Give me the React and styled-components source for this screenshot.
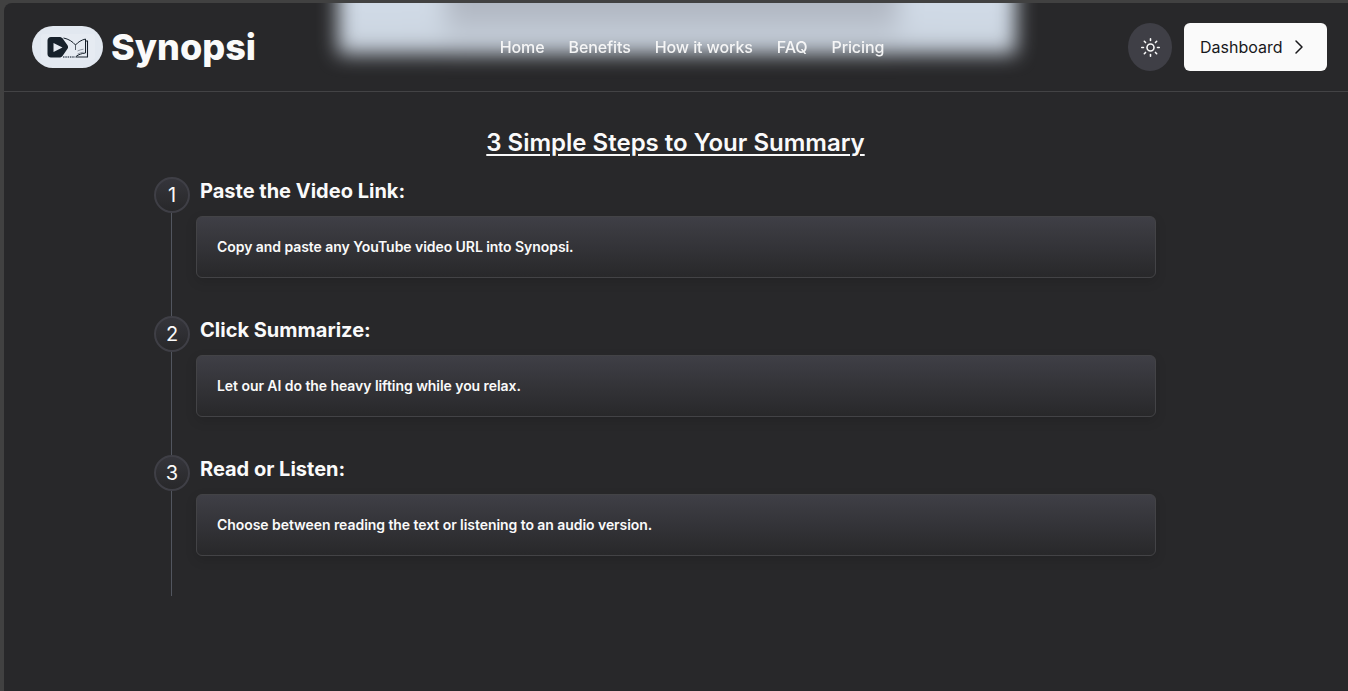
import React from 'react'
import styled, { createGlobalStyle } from 'styled-components'
import { Sun, ChevronRight } from 'lucide-react'

const GlobalStyle = createGlobalStyle`
  html, body {
    margin: 0;
    height: 100%;
    background: #414141;
    font-family: Inter, "Liberation Sans", sans-serif;
    overflow: hidden;
  }
`

const Frame = styled.div`
  position: relative;
  height: 688px;
  margin: 3px 0 0 4px;
  border-top-left-radius: 8px;
  background: #28282a;
  color: #fafafa;
  overflow: hidden;
`

const BlurredPreview = styled.div`
  position: absolute;
  top: -40px;
  left: 334px;
  width: 678px;
  height: 91px;
  background: linear-gradient(180deg, #d0dae6 0%, #d0dae6 60%, #c6cfda 100%);
  filter: blur(10px);

  &::before {
    content: '';
    position: absolute;
    top: 0;
    left: 108px;
    right: 118px;
    height: 91px;
    background: linear-gradient(180deg, #abb1bc 0%, #afb5c0 44%, #bec6d1 75%, rgba(198, 207, 218, 0) 95%);
    filter: blur(8px);
  }
`

const Header = styled.header`
  position: relative;
  display: flex;
  justify-content: space-between;
  align-items: center;
  height: 88px;
  padding: 0 21px 0 28px;
  border-bottom: 1px solid #434345;
`

const Brand = styled.div`
  display: flex;
  align-items: center;
  gap: 8px;
`

const LogoBadge = styled.div`
  display: flex;
  align-items: center;
  justify-content: center;
  width: 71px;
  height: 42px;
  border-radius: 21px;
  background: #e2e8f0;
`

const BrandName = styled.span`
  font-size: 36px;
  font-weight: 800;
  line-height: 40px;
`

const Nav = styled.nav`
  display: flex;
  gap: 24px;
`

const NavLink = styled.a`
  font-size: 16px;
  font-weight: 500;
  line-height: 24px;
  letter-spacing: -0.1px;
  color: #fafafa;
  opacity: 0.95;
`

const Actions = styled.div`
  display: flex;
  align-items: center;
  gap: 12px;
`

const ThemeButton = styled.button`
  display: flex;
  align-items: center;
  justify-content: center;
  width: 44px;
  height: 48px;
  padding: 0;
  border: none;
  border-radius: 50%;
  background: #3f3f46;
  color: #fafafa;
`

const DashboardButton = styled.button`
  display: flex;
  align-items: center;
  gap: 4px;
  width: 143px;
  height: 48px;
  padding: 0 16px;
  border: none;
  border-radius: 6px;
  background: #fafafa;
  color: #18181b;
  font-family: inherit;
  font-size: 16px;
  font-weight: 400;
  white-space: nowrap;
`

const Main = styled.main`
  width: 1002px;
  margin: 0 auto;
`

const Title = styled.h2`
  margin: 35px 0 0;
  padding-right: 1px;
  font-size: 24px;
  font-weight: 600;
  line-height: 32px;
  text-align: center;
  text-decoration: underline;
  text-underline-offset: 3px;
`

const Timeline = styled.ol`
  margin: 18px 0 0 -4px;
  padding: 0 0 2px;
  list-style: none;
  border-left: 1px solid #52565f;
`

const Step = styled.li`
  position: relative;
  padding-left: 24px;
  margin-bottom: 38px;
`

const StepNumber = styled.span`
  position: absolute;
  left: -18px;
  top: 0;
  display: flex;
  align-items: center;
  justify-content: center;
  box-sizing: border-box;
  width: 36px;
  height: 36px;
  border: 2px solid #3f3f46;
  border-radius: 50%;
  background: linear-gradient(180deg, #35353b 0%, #28282a 100%);
  font-size: 20px;
  line-height: 28px;
`

const StepTitle = styled.h3`
  margin: 0 0 11px 4px;
  font-size: 20px;
  font-weight: 700;
  line-height: 28px;
`

const StepCard = styled.div`
  box-sizing: border-box;
  width: 960px;
  height: 62px;
  display: flex;
  align-items: center;
  padding: 0 20px 2px;
  border: 1px solid #434346;
  border-radius: 6px;
  background: linear-gradient(180deg, #3f3f46 0%, #28282a 100%);
  box-shadow: 0 4px 12px rgba(0, 0, 0, 0.12);
  font-size: 14px;
  font-weight: 600;
  letter-spacing: -0.06px;
`

const steps = [
  { title: 'Paste the Video Link:', text: 'Copy and paste any YouTube video URL into Synopsi.' },
  { title: 'Click Summarize:', text: 'Let our AI do the heavy lifting while you relax.' },
  { title: 'Read or Listen:', text: 'Choose between reading the text or listening to an audio version.' },
]

const navItems = ['Home', 'Benefits', 'How it works', 'FAQ', 'Pricing']

const Logo = () => (
  <svg width="54" height="26" viewBox="0 0 54 26" fill="none">
    <rect width="54" height="26" rx="3" fill="#e6ebf2" />
    <path d="M10 3h8c1.500 0 2.500.500 3.500 1.300l5 7c.800 1.200.800 2.400 0 3.500l-5 7.200c-1 1-2 1.500-3.500 1.500h-8c-2 0-3.500-1.500-3.500-3.500V6.500C6.500 4.500 8 3 10 3z" fill="#17212b" />
    <path d="M12.500 9l9 4.500-9 4.500z" fill="#e6ebf2" />
    <path d="M22.500 4c5 1 9 3.500 12 7 2.500-3 6-5 10-6v14c-4 .500-7 1.500-9.500 3.500" stroke="#17212b" strokeWidth="1" />
    <path d="M44.500 7h2v16H34.500" stroke="#17212b" strokeWidth="1.100" />
    <path d="M34.500 11v5" stroke="#17212b" strokeWidth="0.700" />
    <path d="M36.500 20c2-1 4-1.500 6-1.800M36.500 17c2-1 4-1.500 6-1.800" stroke="#6b7280" strokeWidth="0.700" />
    <path d="M22 23h12" stroke="#4b5563" strokeWidth="1.500" strokeDasharray="1.500 .800" />
  </svg>
)

export default function App() {
  return (
    <>
      <GlobalStyle />
      <Frame>
        <BlurredPreview />
        <Header>
          <Brand>
            <LogoBadge>
              <Logo />
            </LogoBadge>
            <BrandName>Synopsi</BrandName>
          </Brand>
          <Nav>
            {navItems.map((item) => (
              <NavLink key={item}>{item}</NavLink>
            ))}
          </Nav>
          <Actions>
            <ThemeButton>
              <Sun size={21} strokeWidth={1.8} />
            </ThemeButton>
            <DashboardButton>
              Dashboard
              <ChevronRight size={24} strokeWidth={1.5} />
            </DashboardButton>
          </Actions>
        </Header>
        <Main>
          <Title>3 Simple Steps to Your Summary</Title>
          <Timeline>
            {steps.map((step, index) => (
              <Step key={step.title}>
                <StepNumber>{index + 1}</StepNumber>
                <StepTitle>{step.title}</StepTitle>
                <StepCard>{step.text}</StepCard>
              </Step>
            ))}
          </Timeline>
        </Main>
      </Frame>
    </>
  )
}
